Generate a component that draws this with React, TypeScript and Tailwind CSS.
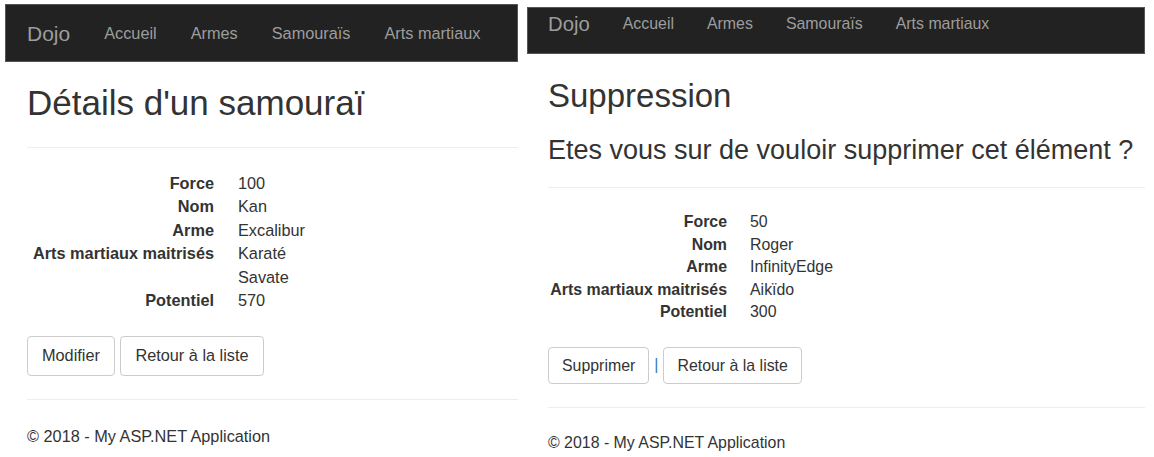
const links = ['Accueil', 'Armes', 'Samouraïs', 'Arts martiaux'];

interface Row {
    label: string;
    values: string[];
}

const kanRows: Row[] = [
    { label: 'Force', values: ['100'] },
    { label: 'Nom', values: ['Kan'] },
    { label: 'Arme', values: ['Excalibur'] },
    { label: 'Arts martiaux maitrisés', values: ['Karaté', 'Savate'] },
    { label: 'Potentiel', values: ['570'] },
];

const rogerRows: Row[] = [
    { label: 'Force', values: ['50'] },
    { label: 'Nom', values: ['Roger'] },
    { label: 'Arme', values: ['InfinityEdge'] },
    { label: 'Arts martiaux maitrisés', values: ['Aikïdo'] },
    { label: 'Potentiel', values: ['300'] },
];

interface NavBarProps {
    className: string;
    brandClass: string;
    linksClass: string;
}

const NavBar: React.FC<NavBarProps> = ({ className, brandClass, linksClass }) => {
    return (
        <div className={`bg-[#222] border border-[#555] flex items-center text-[#9d9d9d] ${className}`}>
            <span className={brandClass}>Dojo</span>
            <div className={`flex ${linksClass}`}>
                {links.map((l) => (
                    <span key={l}>{l}</span>
                ))}
            </div>
        </div>
    );
};

interface DetailsProps {
    rows: Row[];
    className: string;
}

const Details: React.FC<DetailsProps> = ({ rows, className }) => {
    return (
        <div className={`grid ${className}`}>
            {rows.map((row) => (
                <div key={row.label} className="contents">
                    <div className="text-right font-bold">{row.label}</div>
                    <div>
                        {row.values.map((v) => (
                            <div key={v}>{v}</div>
                        ))}
                    </div>
                </div>
            ))}
        </div>
    );
};

const Btn: React.FC<{ className: string; children: React.ReactNode }> = ({ className, children }) => (
    <span className={`inline-block bg-white border border-[#ccc] rounded-[4px] text-[#333] ${className}`}>{children}</span>
);

export default function App() {
    return (
        <div className="flex items-start bg-white text-[#333] font-['Liberation_Sans',Arial,sans-serif] w-[1154px] h-[457px] overflow-hidden">
            {/* details page */}
            <div className="ml-[5px] w-[513px]">
                <NavBar
                    className="mt-[4px] h-[58px] pl-[21px]"
                    brandClass="text-[21px] leading-none"
                    linksClass="ml-[34px] gap-[34px] text-[16.3px]"
                />
                <div className="pl-[22px] text-[16.3px] leading-[23.4px]">
                    <h2 className="mt-[22px] text-[35px] leading-[38px]">Détails d'un samouraï</h2>
                    <div className="mt-[25px] border-t border-[#eee]" />
                    <Details rows={kanRows} className="mt-[24px] grid-cols-[187px_1fr] gap-x-[24px]" />
                    <div className="mt-[24px] flex gap-[5px]">
                        <Btn className="px-[14px] py-[7px]">Modifier</Btn>
                        <Btn className="px-[14.5px] py-[7px]">Retour à la liste</Btn>
                    </div>
                    <div className="mt-[23px] border-t border-[#eee]" />
                    <p className="mt-[25px]">© 2018 - My ASP.NET Application</p>
                </div>
            </div>

            {/* delete page */}
            <div className="ml-[9px] w-[618px]">
                <NavBar
                    className="mt-[7px] h-[47px] pl-[20px] pb-[13px]"
                    brandClass="text-[20.3px] leading-none"
                    linksClass="ml-[33px] gap-[33px] text-[15.9px]"
                />
                <div className="pl-[21px] text-[15.9px] leading-[22.6px]">
                    <h2 className="mt-[23.5px] text-[33px] leading-[36px]">Suppression</h2>
                    <h3 className="mt-[21px] text-[27px] leading-[30px]">Etes vous sur de vouloir supprimer cet élément ?</h3>
                    <div className="mt-[22.5px] border-t border-[#eee]" />
                    <Details rows={rogerRows} className="mt-[23px] grid-cols-[179px_1fr] gap-x-[23px]" />
                    <div className="mt-[23px] flex items-center">
                        <Btn className="px-[13px] py-[6px] leading-[23px]">Supprimer</Btn>
                        <span className="px-[5px] text-[#337ab7]">|</span>
                        <Btn className="px-[13px] py-[6px] leading-[23px]">Retour à la liste</Btn>
                    </div>
                    <div className="mt-[23px] border-t border-[#eee]" />
                    <p className="mt-[24px]">© 2018 - My ASP.NET Application</p>
                </div>
            </div>
        </div>
    );
}
